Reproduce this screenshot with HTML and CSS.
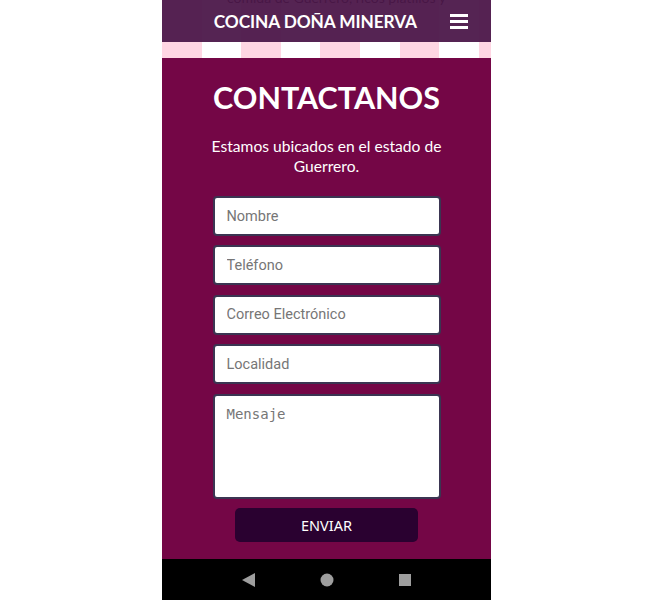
FILE: index.html
```html
<!DOCTYPE html>
<html lang="es">
<head>
<meta charset="utf-8">
<title>Contactanos</title>
<link rel="stylesheet" href="styles.css">
</head>
<body>
<div class="phone">
  <div class="top">
    <p class="behind">comida de Guerrero, ricos platillos y</p>
    <header class="navbar">
      <span class="brand">COCINA DOÑA MINERVA</span>
      <span class="burger"><i></i><i></i><i></i></span>
    </header>
  </div>
  <main class="content">
    <h1 class="title">CONTACTANOS</h1>
    <p class="lead">Estamos ubicados en el estado de Guerrero.</p>
    <form class="form">
      <input class="field" type="text" placeholder="Nombre">
      <input class="field" type="text" placeholder="Teléfono">
      <input class="field" type="text" placeholder="Correo Electrónico">
      <input class="field" type="text" placeholder="Localidad">
      <textarea class="field area" placeholder="Mensaje"></textarea>
      <button class="send" type="button">ENVIAR</button>
    </form>
  </main>
  <nav class="sysbar">
    <svg width="14" height="14" viewBox="0 0 14 14"><polygon points="13,0 13,14 0,7" fill="#9e9e9e"/></svg>
    <svg width="14" height="14" viewBox="0 0 14 14"><circle cx="7" cy="7" r="6.5" fill="#9e9e9e"/></svg>
    <svg width="14" height="14" viewBox="0 0 14 14"><rect x="1" y="1" width="12" height="12" fill="#9e9e9e"/></svg>
  </nav>
</div>
</body>
</html>
```
FILE: styles.css
```css
* { box-sizing: border-box; }
html, body { margin: 0; padding: 0; background: #fff; }
body { font-family: "Lato", "Open Sans", sans-serif; }

.phone {
  width: 329px;
  height: 600px;
  margin-left: 162px;
  display: flex;
  flex-direction: column;
  overflow: hidden;
}

.top {
  height: 58px;
  flex: none;
  position: relative;
  background: repeating-linear-gradient(90deg, #ffd6e3 0 39.6px, #ffffff 39.6px 79.2px);
  overflow: hidden;
}

.behind {
  margin: -9px 0 0;
  text-align: center;
  font-size: 14px;
  line-height: 14px;
  color: #222;
  padding-left: 20px;
}

.navbar {
  position: absolute;
  left: 0; top: 0; right: 0;
  height: 42px;
  background: rgba(74, 22, 72, 0.94);
  display: flex;
  align-items: center;
  justify-content: flex-end;
  padding-right: 23px;
  gap: 33px;
}

.brand {
  color: #fff;
  font-family: "Lato", sans-serif;
  font-weight: 700;
  font-size: 17.3px;
  letter-spacing: -0.1px;
}

.burger {
  width: 18px;
  display: flex;
  flex-direction: column;
  gap: 3px;
}
.burger i {
  display: block;
  height: 3px;
  background: #fff;
}

.content {
  flex: 1;
  background: #740646;
  display: flex;
  flex-direction: column;
  align-items: center;
  padding-top: 21px;
}

.title {
  margin: 0;
  color: #fff;
  font-family: "Lato", sans-serif;
  font-weight: 700;
  font-size: 30.5px;
  line-height: 36px;
}

.lead {
  margin: 22px 0 0;
  width: 240px;
  text-align: center;
  color: #fff;
  font-size: 15.6px;
  line-height: 19.5px;
}

.form {
  margin-top: 20px;
  width: 228px;
  display: flex;
  flex-direction: column;
  align-items: center;
  gap: 9.4px;
}

.field {
  width: 228px;
  height: 40px;
  flex: none;
  border: 2px solid #3b3552;
  border-radius: 4px;
  background: #fff;
  padding: 0 12px;
  font-family: "Roboto", sans-serif;
  font-size: 14.5px;
  color: #333;
  outline: none;
}
.field::placeholder { color: #767676; }

.area {
  height: 105px;
  padding: 10px 12px;
  resize: none;
  font-family: "DejaVu Sans Mono", monospace;
  font-size: 14px;
}

.send {
  width: 183px;
  height: 34px;
  flex: none;
  border: none;
  border-radius: 5px;
  background: #2a0130;
  color: #fff;
  font-family: "Noto Sans", sans-serif;
  font-size: 14.5px;
}

.sysbar {
  height: 41px;
  flex: none;
  background: #000;
  display: flex;
  align-items: center;
  justify-content: center;
  gap: 64px;
}
```
